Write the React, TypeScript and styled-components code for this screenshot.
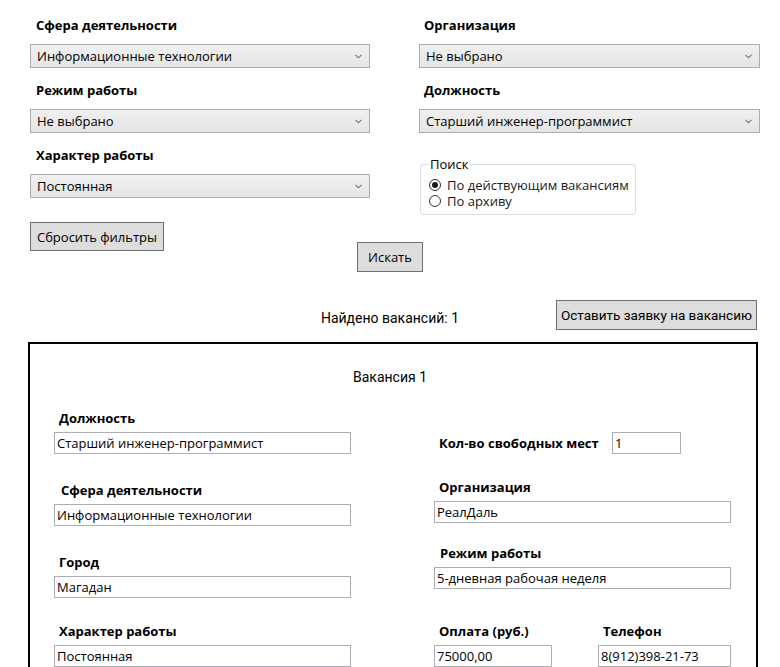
import React from 'react'
import styled, { createGlobalStyle } from 'styled-components'

const GlobalStyle = createGlobalStyle`
  html, body {
    margin: 0;
    padding: 0;
    background: #ffffff;
  }
  body {
    font-family: "Open Sans", "Noto Sans", sans-serif;
    color: #000000;
  }
`

const Page = styled.div`
  width: 780px;
  height: 667px;
  overflow: hidden;
`

const FilterGrid = styled.div`
  display: grid;
  grid-template-columns: 340px 341px;
  column-gap: 49px;
  row-gap: 12px;
  align-items: start;
  padding: 15px 0 0 30px;
`

const Field = styled.div`
  display: flex;
  flex-direction: column;
  gap: 9px;
`

const FieldLabel = styled.div<{ $indent?: number }>`
  font-size: 13px;
  font-weight: 700;
  line-height: 20px;
  padding-left: ${p => p.$indent ?? 6}px;
  white-space: nowrap;
`

const Combo = styled.div`
  box-sizing: border-box;
  height: 24px;
  display: flex;
  align-items: center;
  justify-content: space-between;
  padding: 0 7px 0 6px;
  border: 1px solid #acacac;
  background: linear-gradient(#f0f0f0, #e5e5e5);
  font-size: 13px;
  white-space: nowrap;
`

const Chevron = () => (
  <svg width="7" height="5" viewBox="0 0 7 5">
    <path d="M0.5 0.8 L3.5 3.8 L6.5 0.8" fill="none" stroke="#707070" strokeWidth="1.1" />
  </svg>
)

const SearchGroup = styled.fieldset`
  box-sizing: border-box;
  width: 216px;
  margin: 11px 0 0 1px;
  padding: 5px 6px 5px 8px;
  border: 1px solid #d5dfe5;
  border-radius: 3px;
`

const GroupTitle = styled.legend`
  padding: 0 1px;
  margin: 0;
  font-size: 13px;
  line-height: 16px;
`

const RadioRow = styled.label`
  display: flex;
  align-items: center;
  gap: 6px;
  height: 16px;
  font-size: 13px;
  line-height: 16px;
  color: #1a1a1a;
  white-space: nowrap;
`

const RadioMark = styled.span<{ $checked?: boolean }>`
  position: relative;
  box-sizing: border-box;
  width: 12px;
  height: 12px;
  border-radius: 50%;
  border: 1px solid #333333;
  background: #ffffff;
  flex: none;
  &::after {
    content: '';
    display: ${p => (p.$checked ? 'block' : 'none')};
    position: absolute;
    left: 2px;
    top: 2px;
    width: 6px;
    height: 6px;
    border-radius: 50%;
    background: #1a1a1a;
  }
`

const ActionRow = styled.div`
  display: grid;
  grid-template-columns: 1fr auto 1fr;
  align-items: start;
  padding: 0 30px;
  margin-top: 7px;
`

const Button = styled.button<{ $width: number; $height?: number; $top?: number }>`
  box-sizing: border-box;
  width: ${p => p.$width}px;
  height: ${p => p.$height ?? 30}px;
  margin-top: ${p => p.$top ?? 0}px;
  padding: 0;
  border: 1px solid #707070;
  background: #dddddd;
  color: #000000;
  font-family: "Open Sans", "Noto Sans", sans-serif;
  font-size: 13px;
  white-space: nowrap;
  justify-self: start;
`

const ApplyButton = styled(Button)`
  justify-self: end;
  font-family: Roboto, "Noto Sans", sans-serif;
  font-size: 13.5px;
`

const ResultsRow = styled.div`
  display: grid;
  grid-template-columns: 1fr auto 1fr;
  align-items: start;
  padding: 0 23px;
  margin-top: 28px;
`

const FoundText = styled.div`
  grid-column: 2;
  margin-top: 8px;
  font-family: Roboto, "Noto Sans", sans-serif;
  font-size: 14px;
  line-height: 20px;
`

const Card = styled.section`
  margin: 12px 22px 0 28px;
  padding: 23px 0 0 0;
  height: 400px;
  border: 2px solid #000000;
  border-bottom: none;
`

const CardTitle = styled.div`
  text-align: center;
  padding-right: 6px;
  font-family: Roboto, "Noto Sans", sans-serif;
  font-size: 14px;
  line-height: 20px;
`

const CardGrid = styled.div`
  display: grid;
  grid-template-columns: 297px 297px;
  column-gap: 83px;
  align-items: start;
  padding: 21px 0 0 24px;
`

const Stack = styled.div<{ $top?: number }>`
  display: flex;
  flex-direction: column;
  padding-top: ${p => p.$top ?? 0}px;
`

const CardField = styled.div<{ $top?: number; $width?: number }>`
  display: flex;
  flex-direction: column;
  gap: 4px;
  margin-top: ${p => p.$top ?? 0}px;
  width: ${p => (p.$width ? `${p.$width}px` : 'auto')};
`

const TextBox = styled.div`
  box-sizing: border-box;
  height: 22px;
  width: 100%;
  padding: 0 2px;
  border: 1px solid #abadb3;
  background: #ffffff;
  font-size: 13px;
  line-height: 20px;
  white-space: nowrap;
  overflow: hidden;
`

const InlineField = styled.div`
  display: grid;
  grid-template-columns: 178px 69px;
  align-items: center;
  height: 22px;
`

const SplitRow = styled.div<{ $top?: number }>`
  display: flex;
  gap: 46px;
  margin-top: ${p => p.$top ?? 0}px;
`

const ComboField = ({ label, value, indent }: { label: string; value: string; indent?: number }) => (
  <Field>
    <FieldLabel $indent={indent}>{label}</FieldLabel>
    <Combo>
      <span>{value}</span>
      <Chevron />
    </Combo>
  </Field>
)

const TextField = ({
  label,
  value,
  top,
  indent,
  width
}: {
  label: string
  value: string
  top?: number
  indent?: number
  width?: number
}) => (
  <CardField $top={top} $width={width}>
    <FieldLabel $indent={indent ?? 5}>{label}</FieldLabel>
    <TextBox>{value}</TextBox>
  </CardField>
)

const App = () => {
  return (
    <Page>
      <GlobalStyle />
      <FilterGrid>
        <ComboField label="Сфера деятельности" value="Информационные технологии" />
        <ComboField label="Организация" value="Не выбрано" indent={5} />
        <ComboField label="Режим работы" value="Не выбрано" />
        <ComboField label="Должность" value="Старший инженер-программист" indent={5} />
        <ComboField label="Характер работы" value="Постоянная" />
        <SearchGroup>
          <GroupTitle>Поиск</GroupTitle>
          <RadioRow>
            <RadioMark $checked />
            По действующим вакансиям
          </RadioRow>
          <RadioRow>
            <RadioMark />
            По архиву
          </RadioRow>
        </SearchGroup>
      </FilterGrid>

      <ActionRow>
        <Button $width={134} $height={29}>Сбросить фильтры</Button>
        <Button $width={66} $top={20}>Искать</Button>
      </ActionRow>

      <ResultsRow>
        <FoundText>Найдено вакансий: 1</FoundText>
        <ApplyButton $width={201}>Оставить заявку на вакансию</ApplyButton>
      </ResultsRow>

      <Card>
        <CardTitle>Вакансия 1</CardTitle>
        <CardGrid>
          <Stack>
            <TextField label="Должность" value="Старший инженер-программист" />
            <TextField label="Сфера деятельности" value="Информационные технологии" top={26} indent={7} />
            <TextField label="Город" value="Магадан" top={26} />
            <TextField label="Характер работы" value="Постоянная" top={23} />
          </Stack>
          <Stack $top={24}>
            <InlineField>
              <FieldLabel $indent={5}>Кол-во свободных мест</FieldLabel>
              <TextBox>1</TextBox>
            </InlineField>
            <TextField label="Организация" value="РеалДаль" top={23} />
            <TextField label="Режим работы" value="5-дневная рабочая неделя" top={20} indent={6} />
            <SplitRow $top={32}>
              <TextField label="Оплата (руб.)" value="75000,00" width={118} />
              <TextField label="Телефон" value="8(912)398-21-73" width={133} />
            </SplitRow>
          </Stack>
        </CardGrid>
      </Card>
    </Page>
  )
}

export default App
